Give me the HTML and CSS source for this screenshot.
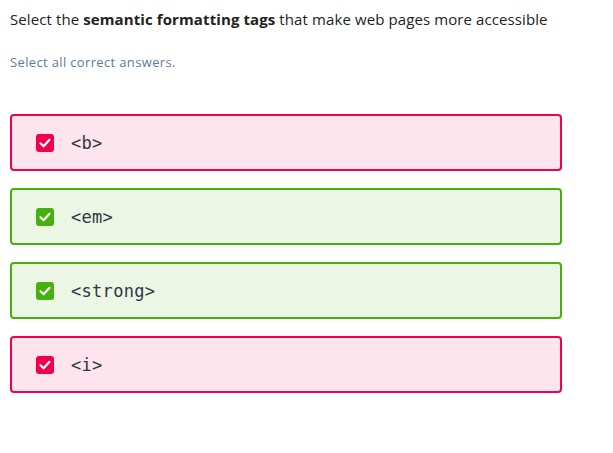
FILE: index.html
```html
<!DOCTYPE html>
<html>
<head>
<meta charset="utf-8">
<link rel="stylesheet" href="styles.css">
</head>
<body>
<div class="quiz">
  <p class="question">Select the <strong>semantic formatting tags</strong> that make web pages more accessible</p>
  <p class="hint">Select all correct answers.</p>
  <ul class="options">
    <li class="option wrong"><span class="box"><svg viewBox="0 0 18 18" width="18" height="18"><path d="M4.5 9.3 L7.6 12.3 L13.5 5.8" fill="none" stroke="#fff" stroke-width="2.2" stroke-linecap="round" stroke-linejoin="round"/></svg></span><code>&lt;b&gt;</code></li>
    <li class="option right"><span class="box"><svg viewBox="0 0 18 18" width="18" height="18"><path d="M4.5 9.3 L7.6 12.3 L13.5 5.8" fill="none" stroke="#fff" stroke-width="2.2" stroke-linecap="round" stroke-linejoin="round"/></svg></span><code>&lt;em&gt;</code></li>
    <li class="option right"><span class="box"><svg viewBox="0 0 18 18" width="18" height="18"><path d="M4.5 9.3 L7.6 12.3 L13.5 5.8" fill="none" stroke="#fff" stroke-width="2.2" stroke-linecap="round" stroke-linejoin="round"/></svg></span><code>&lt;strong&gt;</code></li>
    <li class="option wrong"><span class="box"><svg viewBox="0 0 18 18" width="18" height="18"><path d="M4.5 9.3 L7.6 12.3 L13.5 5.8" fill="none" stroke="#fff" stroke-width="2.2" stroke-linecap="round" stroke-linejoin="round"/></svg></span><code>&lt;i&gt;</code></li>
  </ul>
</div>
</body>
</html>
```
FILE: styles.css
```css
* { box-sizing: border-box; }
body {
  margin: 0;
  background: #fff;
  font-family: "Open Sans", "Noto Sans", sans-serif;
  color: #222;
}
.quiz {
  width: 552px;
  margin-left: 10px;
  padding-top: 7px;
}
.question {
  margin: 0;
  font-size: 15px;
  line-height: 24px;
  letter-spacing: 0.1px;
}
.question strong { font-weight: 700; }
.hint {
  margin: 21px 0 0;
  font-size: 13px;
  line-height: 20px;
  letter-spacing: 0.35px;
  color: #5d7c9b;
}
.options {
  list-style: none;
  margin: 42px 0 0;
  padding: 0;
  display: flex;
  flex-direction: column;
  gap: 17px;
}
.option {
  height: 57px;
  border: 2px solid;
  border-radius: 4px;
  display: flex;
  align-items: center;
  padding-left: 24px;
}
.option.wrong { background: #fee4ec; border-color: #f2004f; }
.option.right { background: #ecf6e5; border-color: #45b00e; }
.box {
  width: 18px;
  height: 18px;
  border-radius: 3px;
  display: flex;
}
.wrong .box { background: #f2004f; }
.right .box { background: #45b00e; }
code {
  margin-left: 17px;
  font-family: "DejaVu Sans Mono", monospace;
  font-size: 17px;
  letter-spacing: 0.3px;
  color: #2d3642;
}
```
